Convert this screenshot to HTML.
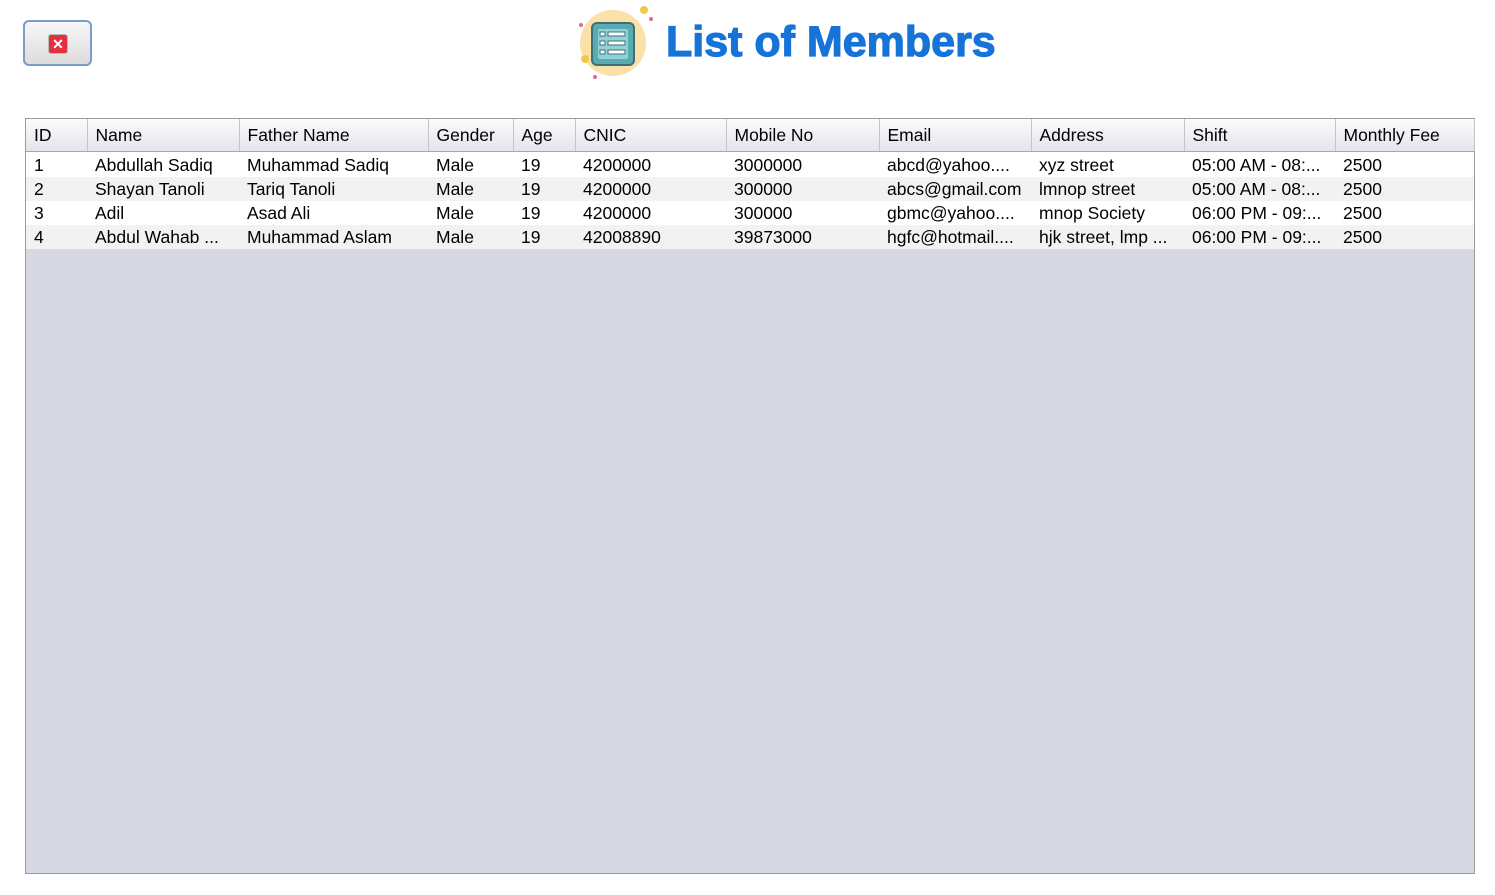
<!DOCTYPE html>
<html><head><style>
body{margin:0;width:1495px;height:895px;background:#fff;position:relative;overflow:hidden;font-family:"Liberation Sans",Arial,sans-serif}
.btn{position:absolute;left:23px;top:20px;width:69px;height:46px;border:2px solid #7b9cc4;border-radius:6px;background:linear-gradient(#f7f7f7,#dcdcdc);box-sizing:border-box}
.btn .x{position:absolute;left:23px;top:12px;width:18px;height:18px;background:#e03141;border:1px solid #bbb;border-radius:3px;color:#fff;font-size:14px;font-weight:bold;text-align:center;line-height:18px}
.title{position:absolute;left:666px;top:18px;font-size:43px;font-weight:bold;color:#1673d8;letter-spacing:0;white-space:nowrap;-webkit-text-stroke:1.2px #1673d8}
.panel{position:absolute;left:25px;top:118px;width:1450px;height:756px;border:1px solid #9a9a9a;box-sizing:border-box;background:#d6d9e2}
table{position:absolute;left:0;top:0;border-collapse:collapse;width:1448px;table-layout:fixed;font-size:17.5px;color:#000}
th{height:32px;font-weight:normal;text-align:left;padding:0 0 0 8px;background:linear-gradient(#fbfbfc,#e3e5ea);border-right:1px solid #c3c5ca;border-bottom:1px solid #a8a8a8;white-space:nowrap}
td{height:24px;padding:0 0 0 8px;white-space:nowrap;overflow:hidden}
tr.a td{background:#fff}tr.b td{background:#f2f2f2}
.sp td{height:1px;background:#fff;padding:0}
</style></head><body>
<div class="btn"><div class="x">✕</div></div>
<svg style="position:absolute;left:575px;top:4px" width="80" height="76" viewBox="0 0 80 76">
<circle cx="38" cy="39" r="33" fill="#fbe0a8"/>
<circle cx="69" cy="6" r="4" fill="#f2c84b"/><circle cx="76" cy="15" r="2" fill="#e06b8a"/>
<circle cx="6" cy="21" r="2" fill="#e06b8a"/><circle cx="10" cy="55" r="4" fill="#f2c84b"/><circle cx="20" cy="73" r="2" fill="#e06b8a"/>
<rect x="17" y="19" width="42" height="42" rx="5" fill="#5aaab2" stroke="#3d6f78" stroke-width="2"/>
<rect x="23" y="25" width="30" height="30" rx="2" fill="#8fd3d8"/>
<g fill="#fff" stroke="#3d6f78" stroke-width="1"><rect x="25" y="28" width="5" height="4"/><rect x="33" y="28" width="17" height="4"/><rect x="25" y="37" width="5" height="4"/><rect x="33" y="37" width="17" height="4"/><rect x="25" y="46" width="5" height="4"/><rect x="33" y="46" width="17" height="4"/></g>
</svg>
<div class="title">List of Members</div>
<div class="panel"><table>
<colgroup><col style="width:61px"><col style="width:152px"><col style="width:189px"><col style="width:85px"><col style="width:62px"><col style="width:151px"><col style="width:153px"><col style="width:152px"><col style="width:153px"><col style="width:151px"><col style="width:139px"></colgroup>
<tr><th>ID</th><th>Name</th><th>Father Name</th><th>Gender</th><th>Age</th><th>CNIC</th><th>Mobile No</th><th>Email</th><th>Address</th><th>Shift</th><th>Monthly Fee</th></tr>
<tr class="sp"><td colspan="11"></td></tr>
<tr class="a"><td>1</td><td>Abdullah Sadiq</td><td>Muhammad Sadiq</td><td>Male</td><td>19</td><td>4200000</td><td>3000000</td><td>abcd@yahoo....</td><td>xyz street</td><td>05:00 AM - 08:...</td><td>2500</td></tr>
<tr class="b"><td>2</td><td>Shayan Tanoli</td><td>Tariq Tanoli</td><td>Male</td><td>19</td><td>4200000</td><td>300000</td><td>abcs@gmail.com</td><td>lmnop street</td><td>05:00 AM - 08:...</td><td>2500</td></tr>
<tr class="a"><td>3</td><td>Adil</td><td>Asad Ali</td><td>Male</td><td>19</td><td>4200000</td><td>300000</td><td>gbmc@yahoo....</td><td>mnop Society</td><td>06:00 PM - 09:...</td><td>2500</td></tr>
<tr class="b"><td>4</td><td>Abdul Wahab ...</td><td>Muhammad Aslam</td><td>Male</td><td>19</td><td>42008890</td><td>39873000</td><td>hgfc@hotmail....</td><td>hjk street, lmp ...</td><td>06:00 PM - 09:...</td><td>2500</td></tr>
</table></div>
</body></html>
